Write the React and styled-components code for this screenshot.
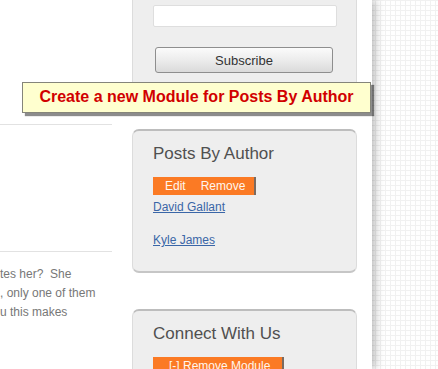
import React from 'react';
import styled, { createGlobalStyle } from 'styled-components';

const GlobalStyle = createGlobalStyle`
  html, body {
    margin: 0;
    padding: 0;
    height: 100%;
  }
  body {
    font-family: "Liberation Sans", Arial, sans-serif;
    background-color: #fff;
    background-image:
      linear-gradient(to right, #f1f1f1 1px, transparent 1px),
      linear-gradient(to bottom, #f1f1f1 1px, transparent 1px);
    background-size: 5px 5px;
    overflow: hidden;
  }
`;

const Page = styled.div`
  position: relative;
  width: 372px;
  height: 100vh;
  background: #fff;
  box-shadow: 3px 0 9px rgba(0, 0, 0, 0.28);
  display: flex;
  align-items: flex-start;
  gap: 20px;
`;

const MainColumn = styled.div`
  width: 112px;
  flex-shrink: 0;
  overflow: hidden;
  display: flex;
  flex-direction: column;
`;

const Rule = styled.div`
  height: 1px;
  background: #e2e2e2;
  margin-top: ${p => p.$top}px;
`;

const Excerpt = styled.div`
  margin-top: 13px;
  font-size: 12px;
  line-height: 19px;
  color: #777;
  white-space: pre;
`;

const Sidebar = styled.div`
  width: 225px;
  flex-shrink: 0;
  display: flex;
  flex-direction: column;
  gap: 36px;
`;

const Widget = styled.div`
  background: #eeeeee;
  border: 1px solid #dcdcdc;
  border-top: 2px solid #bdbdbd;
  border-bottom: 2px solid #c6c6c6;
  border-radius: 7px;
  padding: 13px 20px 23px 20px;
  box-sizing: border-box;
`;

const SubscribeWidget = styled(Widget)`
  margin-top: -20px;
  padding-top: 23px;
  padding-bottom: 0;
  height: 113px;
  display: flex;
  flex-direction: column;
  align-items: flex-start;
`;

const EmailInput = styled.input`
  box-sizing: border-box;
  flex-shrink: 0;
  width: 184px;
  height: 22px;
  border: 1px solid #dedede;
  border-radius: 2px;
  background: #fff;
`;

const SubscribeButton = styled.button`
  box-sizing: border-box;
  flex-shrink: 0;
  margin-top: 20px;
  margin-left: 2px;
  width: 178px;
  height: 26px;
  border: 1px solid #8e8e8e;
  border-radius: 3px;
  background: linear-gradient(to bottom, #fbfbfb 0%, #ececec 50%, #dadada 100%);
  font-family: "Liberation Sans", Arial, sans-serif;
  font-size: 13px;
  color: #333;
  padding: 0;
`;

const WidgetTitle = styled.h3`
  margin: 0;
  font-size: 17px;
  line-height: 20px;
  font-weight: normal;
  color: #505050;
`;

const ModuleBar = styled.div`
  margin-top: 13px;
  display: inline-flex;
  gap: 15px;
  height: 18px;
  box-sizing: border-box;
  padding: 0 ${p => p.$padRight}px 0 ${p => p.$padLeft}px;
  background: #fb7a24;
  border-right: 2px solid #7a6a60;
  font-size: 12px;
  line-height: 18px;
  color: #fff6ee;
  white-space: nowrap;
`;

const Column = styled.div`
  display: flex;
  flex-direction: column;
  align-items: flex-start;
`;

const AuthorList = styled.ul`
  list-style: none;
  margin: 5px 0 0 0;
  padding: 0;
  display: flex;
  flex-direction: column;
  gap: 18px;
`;

const AuthorLink = styled.a`
  display: block;
  font-size: 12px;
  line-height: 15px;
  color: #3a66a7;
  text-decoration: underline;
`;

const Tooltip = styled.div`
  position: absolute;
  left: 22px;
  top: 82px;
  width: 349px;
  height: 31px;
  box-sizing: border-box;
  background: #ffffcf;
  border: 1px solid #85857a;
  box-shadow: 3px 3px 1px rgba(0, 0, 0, 0.45);
  text-align: center;
  font-size: 16px;
  line-height: 28px;
  font-weight: bold;
  color: #d10000;
  z-index: 2;
`;

export default function App() {
  return (
    <>
      <GlobalStyle />
      <Page>
        <MainColumn>
          <Rule $top={124} />
          <Rule $top={126} />
          <Excerpt>
            {'tes her?  She\n, only one of them\nu this makes'}
          </Excerpt>
        </MainColumn>

        <Sidebar>
          <SubscribeWidget>
            <EmailInput type="text" />
            <SubscribeButton>Subscribe</SubscribeButton>
          </SubscribeWidget>

          <Widget>
            <Column>
              <WidgetTitle>Posts By Author</WidgetTitle>
              <ModuleBar $padLeft={12} $padRight={9}>
                <span>Edit</span>
                <span>Remove</span>
              </ModuleBar>
              <AuthorList>
                <li><AuthorLink href="#">David Gallant</AuthorLink></li>
                <li><AuthorLink href="#">Kyle James</AuthorLink></li>
              </AuthorList>
            </Column>
          </Widget>

          <Widget>
            <Column>
              <WidgetTitle>Connect With Us</WidgetTitle>
              <ModuleBar $padLeft={16} $padRight={12}>
                <span>[-] Remove Module</span>
              </ModuleBar>
            </Column>
          </Widget>
        </Sidebar>

        <Tooltip>Create a new Module for Posts By Author</Tooltip>
      </Page>
    </>
  );
}
